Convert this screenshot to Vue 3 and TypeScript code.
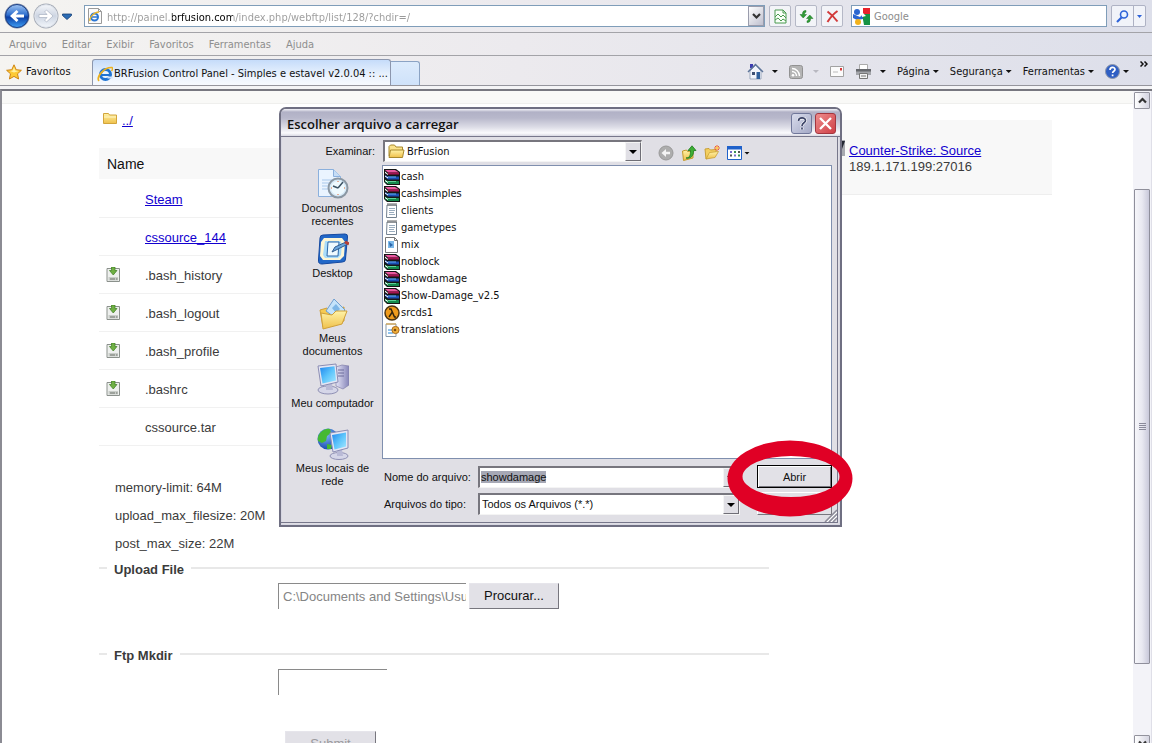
<script setup lang="ts">
import { onMounted, ref } from 'vue'

type FileKind = 'rar' | 'txt' | 'doc' | 'lambda' | 'gear'
interface FileItem { name: string; kind: FileKind }
interface Place { id: string; label: string }
interface Entry { name: string; link: boolean; download: boolean }

const menus: string[] = ['Arquivo', 'Editar', 'Exibir', 'Favoritos', 'Ferramentas', 'Ajuda']
const commands: string[] = ['Página', 'Segurança', 'Ferramentas']

const entries: Entry[] = [
  { name: 'Steam', link: true, download: false },
  { name: 'cssource_144', link: true, download: false },
  { name: '.bash_history', link: false, download: true },
  { name: '.bash_logout', link: false, download: true },
  { name: '.bash_profile', link: false, download: true },
  { name: '.bashrc', link: false, download: true },
  { name: 'cssource.tar', link: false, download: false },
]

const limits: string[] = ['memory-limit: 64M', 'upload_max_filesize: 20M', 'post_max_size: 22M']

const places: Place[] = [
  { id: 'recent', label: 'Documentos recentes' },
  { id: 'desktop', label: 'Desktop' },
  { id: 'documents', label: 'Meus documentos' },
  { id: 'computer', label: 'Meu computador' },
  { id: 'network', label: 'Meus locais de rede' },
]

const files: FileItem[] = [
  { name: 'cash', kind: 'rar' },
  { name: 'cashsimples', kind: 'rar' },
  { name: 'clients', kind: 'txt' },
  { name: 'gametypes', kind: 'txt' },
  { name: 'mix', kind: 'doc' },
  { name: 'noblock', kind: 'rar' },
  { name: 'showdamage', kind: 'rar' },
  { name: 'Show-Damage_v2.5', kind: 'rar' },
  { name: 'srcds1', kind: 'lambda' },
  { name: 'translations', kind: 'gear' },
]

const address = ref('http://painel.brfusion.com/index.php/webftp/list/128/?chdir=/')
const query = ref('')
const fileName = ref('showdamage')
const uploadPath = ref('C:\\Documents and Settings\\Usuario')
const newDir = ref('')
const nameField = ref<HTMLInputElement | null>(null)

onMounted(() => {
  nameField.value?.focus({ preventScroll: true })
  nameField.value?.select()
})
</script>

<template>
  <div class="browser">
    <svg class="defs" aria-hidden="true">
      <defs>
        <linearGradient id="gBack" x1="0" y1="0" x2="0" y2="1">
          <stop offset="0" stop-color="#9fc4f2" /><stop offset=".45" stop-color="#2f6fce" />
          <stop offset=".55" stop-color="#0b3fa6" /><stop offset="1" stop-color="#3fa0f5" />
        </linearGradient>
        <linearGradient id="gFwd" x1="0" y1="0" x2="0" y2="1">
          <stop offset="0" stop-color="#f4f6fa" /><stop offset=".5" stop-color="#cdd5e2" />
          <stop offset="1" stop-color="#f2f6fb" />
        </linearGradient>
        <linearGradient id="gScreen" x1="0" y1="0" x2="1" y2="1">
          <stop offset="0" stop-color="#1f86ee" /><stop offset=".5" stop-color="#5cc4fb" />
          <stop offset="1" stop-color="#a5e7ff" />
        </linearGradient>
        <linearGradient id="gFolder" x1="0" y1="0" x2="0" y2="1">
          <stop offset="0" stop-color="#fff3a8" /><stop offset="1" stop-color="#efc04a" />
        </linearGradient>
        <linearGradient id="gTower" x1="0" y1="0" x2="1" y2="0">
          <stop offset="0" stop-color="#e4e4f6" /><stop offset="1" stop-color="#8584b8" />
        </linearGradient>
        <radialGradient id="gGlobe" cx=".4" cy=".3" r=".8">
          <stop offset="0" stop-color="#7fb9f7" /><stop offset="1" stop-color="#0c3ba8" />
        </radialGradient>
      </defs>
    </svg>

    <header class="chrome">
      <div class="nav-row">
        <div class="nav-buttons">
          <button class="bare" type="button" aria-label="Voltar">
            <svg width="27" height="27" viewBox="0 0 27 27">
              <circle cx="13" cy="13" r="12.500" fill="#7e8ba6" />
              <circle cx="13" cy="13" r="11.500" fill="url(#gBack)" stroke="#1c3f86" />
              <path d="M6 13l6.500-6 2 2-2.700 2.500H20v3h-8.200l2.700 2.500-2 2z" fill="#fff" />
            </svg>
          </button>
          <button class="bare" type="button" aria-label="Avançar">
            <svg width="27" height="27" viewBox="0 0 27 27">
              <circle cx="13" cy="13" r="12.500" fill="#a7adb8" />
              <circle cx="13" cy="13" r="11.200" fill="url(#gFwd)" stroke="#dfe4ec" />
              <path d="M20 13l-6.500-6-2 2 2.700 2.500H6v3h8.200l-2.700 2.500 2 2z" fill="#fff" stroke="#a9b2c2" stroke-width=".7" />
            </svg>
          </button>
          <button class="bare" type="button" aria-label="Páginas recentes">
            <svg width="10" height="7" viewBox="0 0 10 7"><path d="M.500 1h9v1.500L5 6.500.500 2.500z" fill="#2b6cb4" stroke="#173f75" stroke-width=".8" /></svg>
          </button>
        </div>
        <div class="address">
          <svg width="16" height="16" viewBox="0 0 16 16">
            <path d="M1.500.500h10l3 3v12h-13z" fill="#fbfbfb" stroke="#9a9a9a" /><path d="M11.500.500v3h3" fill="none" stroke="#9a9a9a" />
            <circle cx="7.500" cy="9" r="3.500" fill="none" stroke="#2a76d4" stroke-width="2" /><path d="M5 9h6" stroke="#2a76d4" stroke-width="1.500" />
            <path d="M3 13C2 10 7 4 12 4" fill="none" stroke="#e9b52b" stroke-width="1.400" />
          </svg>
          <input id="url" v-model="address" type="text" aria-label="Endereço" />
          <button class="xp-arrow" type="button" aria-label="Mostrar endereços">
            <svg width="9" height="7" viewBox="0 0 9 7"><path d="M1 1l3.500 3.500L8 1" fill="none" stroke="#333" stroke-width="2.200" /></svg>
          </button>
        </div>
        <div class="tool-group">
          <button class="square" type="button" aria-label="Modo de compatibilidade">
            <svg width="13" height="15" viewBox="0 0 13 15">
              <path d="M1 1h8l3 3v10H1z" fill="#f8fff8" stroke="#4b9a50" /><path d="M9 1v3h3" fill="none" stroke="#4b9a50" />
              <path d="M1 8l3-3 3 3 2-2 3 3M1 11l3-2 3 3 2-2 3 2" fill="none" stroke="#4b9a50" />
            </svg>
          </button>
          <button class="square" type="button" aria-label="Atualizar">
            <svg width="15" height="15" viewBox="0 0 15 15">
              <path d="M7 1.500C4 1.500 3.500 3 3.500 5.500H1L4.200 9l3.300-3.500h-2C5.500 4 6 3.200 7 3.200z" fill="#2f9b35" stroke="#1d7424" stroke-width=".5" />
              <path d="M8 13.500c3 0 3.500-1.500 3.500-4H14L10.800 6 7.500 9.500h2c0 1.500-.500 2.300-1.500 2.300z" fill="#2f9b35" stroke="#1d7424" stroke-width=".5" />
            </svg>
          </button>
          <button class="square" type="button" aria-label="Parar">
            <svg width="13" height="13" viewBox="0 0 13 13"><path d="M1.500 1.500c4 3 7 6 10 10M11.500 1C7 4 4 8 1.500 12" fill="none" stroke="#d23a3a" stroke-width="2" /></svg>
          </button>
        </div>
        <div class="search">
          <svg width="17" height="17" viewBox="0 0 17 17">
            <path d="M0 0h17v17H0z" fill="#fff" /><path d="M9 0h8v6H9z" fill="#e8222c" /><path d="M9 6h8v11h-6z" fill="#169244" />
            <circle cx="4" cy="4" r="3" fill="#2a66d0" /><path d="M0 6l7 3 3-3v5l-6 1-4-2z" fill="#2a66d0" />
            <path d="M8 0h2v5l3 3-4 1z" fill="#fff" /><circle cx="5" cy="14" r="3" fill="#f1b21c" />
          </svg>
          <input id="q" v-model="query" type="text" placeholder="Google" aria-label="Pesquisar" />
        </div>
        <div class="search-go">
          <button type="button" aria-label="Ir">
            <svg width="13" height="13" viewBox="0 0 13 13"><circle cx="8" cy="4.500" r="3.500" fill="#eaf3ff" stroke="#2d62d8" stroke-width="1.600" /><path d="M5.500 7.500L1 12" stroke="#2d62d8" stroke-width="2.200" /></svg>
          </button>
          <button class="narrow" type="button" aria-label="Opções de pesquisa">
            <svg width="5" height="3" viewBox="0 0 5 3"><path d="M0 0h5L2.500 3z" fill="#2d62d8" /></svg>
          </button>
        </div>
      </div>

      <nav class="menu-row">
        <button v-for="m in menus" :key="m" class="bare" type="button">{{ m }}</button>
      </nav>

      <div class="tab-row">
        <button class="bare favorites" type="button">
          <svg width="16" height="16" viewBox="0 0 16 16"><path d="M8 .800l2.200 4.900 5.200.600-3.900 3.500 1.100 5.200L8 12.400 3.400 15l1.100-5.200L.600 6.300l5.200-.600z" fill="#fdca35" stroke="#cf8413" /><path d="M8 3l1.300 3.600L13 7 8 8.500 4 7l2.700-.500z" fill="#fff0a0" /></svg>
          <span>Favoritos</span>
        </button>
        <button class="tab" type="button">
          <svg width="16" height="16" viewBox="0 0 16 16">
            <circle cx="8.500" cy="8.500" r="5" fill="#e9f5ff" stroke="#1f74d2" stroke-width="3" /><path d="M5 9h9" stroke="#1f74d2" stroke-width="2" />
            <path d="M10.500 10.500h5v2h-5z" fill="#cfe3fb" />
            <path d="M2 15C-1 11 7 1 15 1.500c1 1 0 3-.500 3.500" fill="none" stroke="#edb21f" stroke-width="1.700" />
          </svg>
          <span>BRFusion Control Panel - Simples e estavel v2.0.04 :: ...</span>
        </button>
        <button class="new-tab" type="button" aria-label="Nova guia"></button>
        <div class="commands">
          <button class="bare command icon-command" type="button" aria-label="Página inicial">
            <svg width="17" height="17" viewBox="0 0 17 17">
              <path d="M3 1h3v4H3z" fill="#3b3bb0" /><path d="M3 8l6-6 5 6v8H3z" fill="#f1f4fb" stroke="#7f8fae" stroke-width=".7" />
              <path d="M1 9l7.500-7.500L16 9" fill="none" stroke="#5d7499" stroke-width="1.500" /><path d="M9.500 9h3.500v7H9.500z" fill="#2f5f9c" /><path d="M5 9h3v3H5z" fill="#3d4f74" />
            </svg>
            <i class="caret"></i>
          </button>
          <button class="bare command rss" type="button" aria-label="Feeds" disabled>
            <svg width="14" height="14" viewBox="0 0 14 14"><rect x=".5" y=".5" width="13" height="13" rx="2" fill="#b4b4b4" stroke="#929292" /><circle cx="4" cy="10.200" r="1.300" fill="#fff" /><path d="M3 6.500a4.500 4.500 0 014.500 4.500M3 3.500a7.500 7.500 0 017.500 7.500" fill="none" stroke="#fff" stroke-width="1.400" /></svg>
            <i class="caret faded"></i>
          </button>
          <button class="bare command" type="button" aria-label="Ler email">
            <svg width="14" height="11" viewBox="0 0 14 11"><path d="M.500.500h13v10H.500z" fill="#fbfbfb" stroke="#a2a2a2" /><path d="M10 2h2v2.500h-2z" fill="#d63a3a" /><path d="M3 6h5" stroke="#bbb" /></svg>
          </button>
          <button class="bare command icon-command" type="button" aria-label="Imprimir">
            <svg width="17" height="15" viewBox="0 0 17 15"><path d="M4.500.500h8v5h-8z" fill="#fff" stroke="#aaa" /><path d="M1 5h15v6H1z" fill="#a3a5aa" /><path d="M1 5h15v2.500H1z" fill="#66686d" /><path d="M4.500 9.500h8v5h-8z" fill="#f3f3f3" stroke="#777" /><path d="M6 12h5" stroke="#777" /></svg>
            <i class="caret"></i>
          </button>
          <button v-for="c in commands" :key="c" class="bare command" type="button">{{ c }}<i class="caret"></i></button>
          <button class="bare command" type="button" aria-label="Ajuda">
            <svg width="15" height="15" viewBox="0 0 15 15"><circle cx="7.500" cy="7.500" r="7" fill="#2f5fc4" stroke="#8e97aa" /><path d="M5 6c0-3.500 5-3.500 5-.500 0 1.800-2.400 1.700-2.400 3.500M7.600 10.500v1.800" fill="none" stroke="#fff" stroke-width="1.700" /></svg>
            <i class="caret"></i>
          </button>
        </div>
        <button class="bare more" type="button" aria-label="Mais comandos">
          <svg width="8" height="6" viewBox="0 0 8 6"><path d="M.500.500L3 3 .500 5.500M4.500.500L7 3 4.500 5.500" fill="none" stroke="#111" stroke-width="1.500" /></svg>
        </button>
      </div>
    </header>

    <div class="viewport">
      <main class="page">
        <div class="banner"></div>
        <div class="columns">
          <section class="files">
            <div class="parent">
              <svg width="14" height="12" viewBox="0 0 14 12"><path d="M.500 1.500h5l1 1.500h7v8.500H.500z" fill="url(#gFolder)" stroke="#d2a53c" /><path d="M1 5h12" stroke="#fff5c4" /></svg>
              <a href="#">../</a>
            </div>
            <table>
              <colgroup><col class="dl-col" /><col /></colgroup>
              <thead><tr><th colspan="2">Name</th></tr></thead>
              <tbody>
                <tr v-for="e in entries" :key="e.name">
                  <td class="dl">
                    <svg v-if="e.download" width="15" height="15" viewBox="0 0 15 15">
                      <path d="M1 1.500h12.500v13H1z" fill="#eef0ee" stroke="#8b918c" /><path d="M2.500 10h9.500v3.500H2.500z" fill="#c9cdc9" /><path d="M4 12h5M10 12h1.500" stroke="#70766f" />
                      <path d="M5.500 0h3.500v3.500H11L7.250 8 3.500 3.500h2z" fill="#6fb043" stroke="#3e7d22" stroke-width=".7" />
                    </svg>
                  </td>
                  <td class="entry"><a v-if="e.link" href="#">{{ e.name }}</a><template v-else>{{ e.name }}</template></td>
                </tr>
              </tbody>
            </table>
            <div class="limits"><p v-for="l in limits" :key="l">{{ l }}</p></div>
            <fieldset>
              <legend>Upload File</legend>
              <div class="upload">
                <input id="up" v-model="uploadPath" class="inset" type="text" aria-label="Upload File" readonly />
                <button class="classic" type="button">Procurar...</button>
              </div>
            </fieldset>
            <fieldset>
              <legend>Ftp Mkdir</legend>
              <div class="mkdir">
                <input id="dir" v-model="newDir" class="inset short" type="text" aria-label="Ftp Mkdir" />
                <button class="classic submit" type="button" disabled>Submit</button>
              </div>
            </fieldset>
          </section>
          <aside class="server">
            <svg width="16" height="16" viewBox="0 0 16 16"><path d="M0 0h16v16H0z" fill="#a7a9b0" /><path d="M2 1h14l-3 8H2z" fill="#232733" /></svg>
            <div><a href="#">Counter-Strike: Source</a><br />189.1.171.199:27016</div>
          </aside>
        </div>
      </main>
      <div class="scrollbar">
        <button class="sb-button" type="button" aria-label="Rolar para cima">
          <svg width="9" height="7" viewBox="0 0 9 7"><path d="M1 5.500L4.500 2 8 5.500" fill="none" stroke="#333" stroke-width="2.200" /></svg>
        </button>
        <div class="gap-top"></div>
        <div class="thumb"><i></i><i></i><i></i><i></i></div>
        <div class="gap-bottom"></div>
        <button class="sb-button" type="button" aria-label="Rolar para baixo">
          <svg width="9" height="7" viewBox="0 0 9 7"><path d="M1 1.500L4.500 5 8 1.500" fill="none" stroke="#333" stroke-width="2.200" /></svg>
        </button>
      </div>
    </div>

    <section class="dialog" role="dialog" aria-labelledby="dlg-title">
      <div class="title-bar">
        <h1 id="dlg-title">Escolher arquivo a carregar</h1>
        <button class="cap help" type="button" aria-label="Ajuda">
          <svg width="10" height="13" viewBox="0 0 10 13"><path d="M1.500 4c0-4 7-4 7-.500C8.500 6 5 5.500 5 9M5 10.500v2" fill="none" stroke="#fff" stroke-width="3" /><path d="M1.500 4c0-4 7-4 7-.500C8.500 6 5 5.500 5 9M5 10.500v2" fill="none" stroke="#3c4468" stroke-width="1.700" /></svg>
        </button>
        <button class="cap close" type="button" aria-label="Fechar">
          <svg width="13" height="13" viewBox="0 0 13 13"><path d="M1 1l11 11M12 1L1 12" stroke="#fff" stroke-width="2.300" /></svg>
        </button>
      </div>
      <div class="dialog-body">
        <div class="look-row">
          <label for="look">Examinar:</label>
          <div class="combo look">
            <svg width="17" height="15" viewBox="0 0 17 15"><path d="M1 12V2.500L2.500 1h4L8 3h6.500v3" fill="#fbe38c" stroke="#a8892d" /><path d="M1 13.500L2.500 6h13.500l-1.500 7.500z" fill="url(#gFolder)" stroke="#a8892d" /></svg>
            <select id="look"><option>BrFusion</option></select>
            <span class="drop"></span>
          </div>
          <div class="dialog-tools">
            <button class="bare" type="button" aria-label="Última pasta" disabled>
              <svg width="16" height="16" viewBox="0 0 16 16"><circle cx="8" cy="8" r="7" fill="#adadad" stroke="#999" /><path d="M3.500 8L8 4v2.700h4v2.600H8V12z" fill="#f4f4f4" /></svg>
            </button>
            <button class="bare" type="button" aria-label="Um nível acima">
              <svg width="16" height="16" viewBox="0 0 16 16"><path d="M1.500 6l4-1 1 1.500L12 6v7l-9.500 2.500z" fill="url(#gFolder)" stroke="#c39a2c" /><path d="M5 13c4 0 4.500-3 4.500-7.500H7L11 .800l4 4.700h-2.300C12.500 11 10 14 5 13z" fill="#3dae35" stroke="#1d7a1d" stroke-width=".8" /></svg>
            </button>
            <button class="bare" type="button" aria-label="Criar nova pasta">
              <svg width="16" height="16" viewBox="0 0 16 16"><path d="M1 4l4-.500L6.500 5l5.500-.500v3L2 14z" fill="#f3cf60" stroke="#c99f35" /><path d="M2 14l3.500-6.500 9-1L11 12.500z" fill="url(#gFolder)" stroke="#c99f35" stroke-width=".8" /><path d="M13 0v6M10 3h6M11 1l4 4M15 1l-4 4" stroke="#f0602c" /><circle cx="13" cy="3" r="1.200" fill="#ffd34d" /></svg>
            </button>
            <button class="bare views" type="button" aria-label="Exibir">
              <svg width="15" height="14" viewBox="0 0 15 14"><path d="M.500.500h14v13H.500z" fill="#fff" stroke="#1f61ca" /><path d="M0 0h15v3.500H0z" fill="#1f61ca" /><path d="M3 6h2M7 9.500h2" stroke="#7b6cd0" stroke-width="2" /><path d="M7 6h2M11 9.500h2" stroke="#3c8f54" stroke-width="2" /><path d="M11 6h2M3 9.500h2" stroke="#555" stroke-width="2" /></svg>
              <i class="caret"></i>
            </button>
          </div>
        </div>

        <div class="browse">
          <nav class="places">
            <button v-for="p in places" :key="p.id" class="bare place" type="button">
              <svg v-if="p.id === 'recent'" width="32" height="32" viewBox="0 0 32 32">
                <path d="M1.500 1.500h15l7 7v20h-22z" fill="#eaf4ff" stroke="#8bb0dd" /><path d="M16.500 1.500v7h7" fill="#c6ddf6" stroke="#8bb0dd" /><path d="M5 12h13M5 15h10M5 18h6M5 21h6" stroke="#a9c9ec" />
                <circle cx="21" cy="20" r="9.500" fill="#d6e9f7" stroke="#8a97a3" stroke-width="2" /><circle cx="21" cy="20" r="7" fill="#effaff" /><path d="M21 20l5-6M21 20l-5-2" stroke="#3c5365" stroke-width="1.500" /><path d="M21 13v1M21 26v1M14 20h1M27 20h1" stroke="#e0672e" />
              </svg>
              <svg v-else-if="p.id === 'desktop'" width="32" height="32" viewBox="0 0 32 32">
                <path d="M3 5q0-3 3-3l22-1q3 0 2.500 3l-2 22q0 3-3 3L5 31q-4 0-3.500-4z" fill="#2268c8" stroke="#1549a0" /><path d="M7 5h18l3 4-1 14-4 4H6l-3-4 1-14z" fill="#fdf6d5" />
                <path d="M8 8h15l2 3-1 11-3 3H8l-2-3z" fill="#a9dcfa" /><path d="M11 9h11l-1 14H10z" fill="#eefaff" stroke="#2b67a8" /><path d="M15 19l3-5 11-5 2 2-10 5z" fill="#69a6de" stroke="#315c8d" /><path d="M28 9l4 2" stroke="#b74034" stroke-width="3" />
              </svg>
              <svg v-else-if="p.id === 'documents'" width="32" height="32" viewBox="0 0 32 32">
                <path d="M3 12l7-2 3 3 14-4v14L6 29z" fill="#f6ca52" stroke="#cfa03a" /><path d="M17 1l11 11-8 9-11-8z" fill="#c4e3fa" stroke="#6f9fd0" /><path d="M15 10l4-4 4 5-4 4z" fill="#7db6e6" /><path d="M4 15l11 2 4-4h11l-5 13-19 5z" fill="url(#gFolder)" stroke="#cfa03a" />
              </svg>
              <svg v-else-if="p.id === 'computer'" width="32" height="32" viewBox="0 0 32 32">
                <path d="M19 4l6-2 7 1v19l-6 4-7-3z" fill="url(#gTower)" stroke="#8281aa" stroke-width=".7" /><path d="M21 7h6M21 10h6M21 13h6" stroke="#6c6c9c" />
                <ellipse cx="11" cy="27" rx="10" ry="4" fill="#d5d6e8" stroke="#8f90b4" /><path d="M9 20h6l1 7H9z" fill="#b9bad6" /><path d="M1 3l18-2 2 18-17 4z" fill="#e4e6f4" stroke="#8b8db4" /><path d="M3 5l14.500-1.700L19 17.500 5.500 20.500z" fill="url(#gScreen)" />
              </svg>
              <svg v-else width="32" height="32" viewBox="0 0 32 32">
                <circle cx="11" cy="11" r="10.500" fill="url(#gGlobe)" /><path d="M3 5q5-5 10-4l1 4-4 3-1 5-4 2-4-2q-1-4 2-8zM10 16l5 1-1 4-4 0z" fill="#45b934" />
                <ellipse cx="22" cy="28" rx="9" ry="3.500" fill="#d5d6e8" stroke="#8f90b4" /><path d="M20 21h5l1 7h-6z" fill="#b9bad6" /><path d="M13 5l18-3v18l-15 4z" fill="#e4e6f4" stroke="#8b8db4" /><path d="M15 7l14-2.500v14L17.500 21.500z" fill="url(#gScreen)" />
              </svg>
              <span>{{ p.label }}</span>
            </button>
          </nav>
          <ul class="listing">
            <li v-for="f in files" :key="f.name">
              <button class="bare" type="button">
                <svg v-if="f.kind === 'rar'" width="16" height="16" viewBox="0 0 16 16">
                  <path d="M0 0h12l4 3v13H3l-3-3z" fill="#161616" />
                  <path d="M1 1h10l4 2.500H4z" fill="#e9589f" /><path d="M4 3.500h11v2H4z" fill="#a3124f" /><path d="M1 2.500l3 2.500v1L1 4z" fill="#fff" />
                  <path d="M1 6l3 1.500h11v3H4L1 8z" fill="#1b4fb4" /><path d="M4 8h8" stroke="#63b0f0" /><path d="M1 7l3 2" stroke="#fff" />
                  <path d="M1 10.500L4 12h11v3H4l-3-2z" fill="#158a4c" /><path d="M4 12.500h8" stroke="#5ed298" /><path d="M1 11.500l3 2" stroke="#fff" />
                </svg>
                <svg v-else-if="f.kind === 'txt'" width="16" height="16" viewBox="0 0 16 16">
                  <path d="M3 2h9.500v12.500H2.500z" fill="#fff" stroke="#758391" /><path d="M4 0v3M6 0v3M8 0v3M10 0v3M12 0v3" stroke="#666" /><path d="M5 5.500h6M5 7.500h6M5 9.500h5M5 11.500h6" stroke="#9aacbd" />
                </svg>
                <svg v-else-if="f.kind === 'doc'" width="16" height="16" viewBox="0 0 16 16">
                  <path d="M1.500.500h9l3 3v12h-12z" fill="#fff" stroke="#777" /><path d="M10.500.500v3h3" fill="none" stroke="#777" /><path d="M4 4h6v7H4z" fill="#7bb8e8" /><path d="M5 5l4 3-3 2z" fill="#2a64a8" />
                </svg>
                <svg v-else-if="f.kind === 'lambda'" width="16" height="16" viewBox="0 0 16 16">
                  <circle cx="8" cy="8" r="7" fill="#ef9b1c" stroke="#4d3512" stroke-width="1.500" /><path d="M5 4h2l3.500 8H12M8 7.500L5 12" fill="none" stroke="#33230c" stroke-width="1.500" />
                </svg>
                <svg v-else width="16" height="16" viewBox="0 0 16 16">
                  <path d="M2 2h10v12.500H2z" fill="#fff" stroke="#8798a8" /><path d="M3 1v2M5 1v2M7 1v2M9 1v2M11 1v2" stroke="#e0a030" /><path d="M4 8h4M4 11h5" stroke="#8fc3ee" stroke-width="2" />
                  <circle cx="11.500" cy="8" r="3.600" fill="#f0b03a" stroke="#a9691b" /><circle cx="11" cy="8" r="1.300" fill="#7b4a18" />
                </svg>
                <span>{{ f.name }}</span>
              </button>
            </li>
          </ul>
          <form class="fields" @submit.prevent>
            <label for="fname">Nome do arquivo:</label>
            <div class="combo">
              <input id="fname" ref="nameField" v-model="fileName" type="text" spellcheck="false" />
              <span class="drop"></span>
            </div>
            <button class="dlg-button default" type="submit">Abrir</button>
            <label for="ftype">Arquivos do tipo:</label>
            <div class="combo">
              <select id="ftype"><option>Todos os Arquivos (*.*)</option></select>
              <span class="drop"></span>
            </div>
            <button class="dlg-button" type="button" aria-label="Cancelar"></button>
          </form>
        </div>
      </div>
      <svg class="grip" width="13" height="13" viewBox="0 0 13 13"><path d="M1 13L13 1M5 13l8-8M9 13l4-4" stroke="#8d8c99" stroke-width="1.500" /><path d="M3 13L13 3M7 13l6-6" stroke="#fff" /></svg>
      <svg class="ring" width="126" height="78" viewBox="0 0 126 78" aria-hidden="true">
        <path fill="#e00025" fill-rule="evenodd" d="M0.500 38.500a62.500 38 0 01125 0a62.500 38 0 01-125 0zM15.500 36.500a48.500 20.500 0 0097 0a48.500 20.500 0 00-97 0z" />
      </svg>
    </section>
  </div>
</template>

<style>
html, body { margin: 0; overflow: hidden; background: #fff; }
</style>

<style scoped>
* { box-sizing: border-box; }
.browser {
  --ui: "DejaVu Sans Condensed", "Noto Sans", sans-serif;
  --page: "Liberation Sans", Arial, sans-serif;
  position: relative; display: flex; flex-direction: column; height: 100vh; overflow: hidden;
  font: 11px/14px var(--page); color: #111;
}
.defs { position: absolute; width: 0; height: 0; }
svg { display: block; flex: none; }
button, input, select { font: inherit; color: inherit; margin: 0; outline: 0; border-radius: 0; }
.bare { padding: 0; border: 0; background: none; }
a { color: #1200cf; text-decoration: underline; }

.chrome { flex: none; background: linear-gradient(90deg, #f5f4f1, #eceaee 45%, #dddfea); border-bottom: 1px solid #95959d; font-family: var(--ui); font-size: 11px; }
.nav-row { display: flex; align-items: center; height: 33px; padding: 0 6px 0 4px; border-bottom: 1px solid #a3a3a8; }
.nav-buttons { display: flex; align-items: center; gap: 2px; width: 80px; }
.address, .search { display: flex; align-items: center; height: 22px; border: 1px solid #7f9db9; background: #fff; }
.address { flex: 1; padding-left: 2px; }
.address input {
  flex: 1; min-width: 0; padding: 2px 4px 0; border: 0; height: 20px;
  background: linear-gradient(90deg, #9a9a9a 69px, #000 69px 130px, #9a9a9a 130px);
  -webkit-background-clip: text; background-clip: text; color: transparent; font-size: 11px;
}
.xp-arrow { display: grid; place-items: center; width: 16px; height: 20px; padding: 0; border: 1px solid #9a9cac; background: linear-gradient(135deg, #fff, #bfc0cf); }
.tool-group { display: flex; gap: 4px; margin: 0 8px 0 4px; }
.square { display: grid; place-items: center; width: 22px; height: 22px; padding: 0; border: 1px solid #b5b8c6; border-radius: 2px; background: #f3f4f8; }
.search { width: 256px; padding-left: 1px; margin-right: 4px; }
.search input { flex: 1; min-width: 0; padding: 2px 4px 0; border: 0; background: none; }
.search input::placeholder { color: #8c8c8c; opacity: 1; }
.search-go { display: flex; height: 22px; border: 1px solid #aeb2c4; border-radius: 2px; background: #f1f3f9; }
.search-go button { display: grid; place-items: center; width: 21px; padding: 0; border: 0; background: none; }
.search-go .narrow { width: 12px; border-left: 1px solid #aeb2c4; }
.menu-row { display: flex; align-items: center; gap: 15px; height: 23px; padding: 2px 0 0 9px; border-bottom: 1px solid #a3a3a8; }
.menu-row button { color: #8e8e8e; }
.tab-row { display: flex; align-items: flex-end; height: 29px; padding-right: 3px; }
.favorites { display: flex; align-items: center; gap: 4px; align-self: center; width: 86px; margin-left: 6px; padding-top: 2px; }
.tab { display: flex; align-items: center; gap: 1px; width: 299px; height: 26px; padding: 2px 4px 0; border: 1px solid #8c96ad; border-bottom: 0; border-radius: 3px 3px 0 0; background: linear-gradient(#c5dcfa, #eaf2fd 60%, #f6f9fe); white-space: nowrap; }
.new-tab { width: 29px; height: 24px; padding: 0; border: 1px solid #8ba3c4; border-left: 0; border-bottom: 0; border-radius: 0 3px 0 0; background: linear-gradient(#dcebfc, #cfe2fa); }
.commands { display: flex; flex: 1; align-self: center; justify-content: flex-end; align-items: center; gap: 11px; margin-right: 11px; padding-top: 2px; }
.command { display: flex; align-items: center; gap: 3px; white-space: nowrap; }
.icon-command { gap: 8px; }
.rss { gap: 10px; }
.caret { width: 6px; height: 3px; background: #111; clip-path: polygon(0 0, 100% 0, 50% 100%); }
.caret.faded { background: #b8b8c0; }
.more { align-self: flex-start; margin-top: 5px; width: 9px; }

.viewport { display: flex; flex: 1; min-height: 0; margin-top: 3px; border-top: 2px solid #77777f; border-left: 2px solid #8b8b93; background: #fff; box-shadow: 0 -3px 0 #f4f4f6; }
.page { flex: 1; min-width: 0; overflow: hidden; font: 13px/16px var(--page); color: #3b3b3b; }
.banner { height: 13px; background: #f9f9f7; border-bottom: 1px solid #efefed; }
.columns { display: grid; grid-template-columns: minmax(0, 670px) minmax(0, 263px); column-gap: 20px; align-items: start; padding-left: 97px; }
.parent { display: flex; gap: 5px; padding: 8px 0 0 4px; height: 44px; }
.parent a { margin-top: 1px; }
table { width: 100%; border-collapse: collapse; table-layout: fixed; }
.dl-col { width: 46px; }
th { height: 31px; padding: 0 8px; background: #f8f8f8; color: #111; font-weight: 400; font-size: 14px; text-align: left; }
td { height: 38px; padding: 0; border-bottom: 1px solid #f1f1f1; }
.dl { padding-left: 7px; }
.entry { padding-top: 4px; }
.limits { padding: 28px 0 0 16px; }
.limits p { height: 28px; margin: 0; line-height: 28px; }
fieldset { min-width: 0; height: 86px; margin: 0; padding: 0 0 0 179px; border: 0; border-top: 2px solid #e8e8e8; }
legend { margin-left: -171px; padding: 4px 7px 0; font-weight: 700; line-height: 16px; }
.upload { display: flex; gap: 3px; padding-top: 5px; }
.inset { width: 188px; height: 26px; padding: 0 0 0 4px; border: solid #8a8a8a; border-width: 1px 0 0 1px; background: none; color: #858585; }
.short { width: 109px; }
.classic { height: 26px; width: 90px; padding: 0; border: 1px solid #e6e5eb; border-right-color: #77767e; border-bottom-color: #77767e; background: #e2e1e7; color: #111; }
.mkdir { display: flex; flex-direction: column; gap: 36px; padding-top: 5px; }
.submit { width: 91px; margin-left: 7px; color: #9a9a9e; }
.server { display: flex; gap: 4px; height: 75px; margin-top: 16px; padding: 20px 0 0 40px; background: #f8f8f8; border-bottom: 1px solid #eee; }
.server div { padding-top: 3px; }

.scrollbar { display: flex; flex-direction: column; width: 19px; padding: 1px 2px 0 1px; background: #f3f3f8; border-right: 1px solid #dfdfe8; height: calc(100% + 9px); }
.sb-button { display: grid; place-items: center; flex: none; width: 16px; height: 17px; padding: 0; border: 1px solid #93939d; border-radius: 1px; background: linear-gradient(90deg, #fff, #d5d5e1); }
.gap-top { flex: 81; }
.gap-bottom { flex: 71; }
.thumb { flex: 476; display: flex; flex-direction: column; justify-content: center; align-items: center; gap: 1px; width: 16px; border: 1px solid #8f8f9b; border-radius: 1px; background: linear-gradient(90deg, #f6f6fa, #e9e9f1 50%, #c9c9da); }
.thumb i { width: 7px; height: 1px; background: #8a8a9a; }

.dialog { position: absolute; left: 279px; top: 107px; width: 563px; border: 2px solid #6f6f82; border-radius: 7px 7px 0 0; background: #e0dfe5; box-shadow: inset 0 0 0 1px #d7d7e2; color: #111; }
.title-bar { display: flex; align-items: center; gap: 3px; height: 28px; padding: 1px 4px 0 6px; border-bottom: 1px solid #77778b; border-radius: 5px 5px 0 0; background: linear-gradient(#f3f3f8 0, #b1b1c6 3px, #b8b8cb 9px, #dcdce6 18px, #fbfbfd 24px, #d8d8e2); }
h1 { flex: 1; margin: 0; padding-top: 2px; font: 600 13px/16px "Open Sans", "Noto Sans", sans-serif; }
.cap { display: grid; place-items: center; width: 21px; height: 21px; padding: 0; border: 1px solid #70779a; border-radius: 3px; }
.help { background: linear-gradient(135deg, #d9dcec, #a4a9c6); }
.close { border-color: #a3363f; background: linear-gradient(135deg, #ee8d8d, #cf3f46); }
.dialog-body { margin: 0 2px 2px 0; padding: 1px 5px 7px 2px; border-right: 1px solid #77778b; border-bottom: 1px solid #77778b; }
.look-row { display: grid; grid-template-columns: 92px 259px 1fr; column-gap: 8px; align-items: center; height: 27px; padding-bottom: 1px; }
.look-row label { text-align: right; }
.combo { position: relative; display: flex; align-items: center; height: 22px; border: 2px solid #77767e; border-right: 1px solid #f4f4f4; border-bottom: 1px solid #f4f4f4; background: #fff; }
.combo select, .combo input { flex: 1; min-width: 0; width: 100%; height: 100%; padding: 0 18px 0 1px; border: 0; background: none; appearance: none; }
.combo select { padding-left: 2px; }
.combo.look { gap: 2px; padding-left: 3px; }
.combo.look select { padding-left: 0; font-family: var(--ui); }
.combo input { color: #111; }
.combo input::selection { background: #a6a8b5; color: #111; }
.drop { position: absolute; right: 0; top: 0; bottom: 0; width: 16px; border: 1px solid #f5f5f5; border-right-color: #6f6e76; border-bottom-color: #6f6e76; background: #e0dfe5; pointer-events: none; }
.drop::after { content: ""; position: absolute; left: 3px; top: 7px; border: 4px solid transparent; border-top-color: #000; border-bottom: 0; }
.dialog-tools { display: flex; gap: 7px; padding: 4px 0 0 8px; }
.views { display: flex; align-items: center; gap: 2px; }
.browse { display: grid; grid-template-columns: 99px minmax(0, 1fr); grid-template-rows: 294px auto; }
.places { grid-row: 1 / 3; display: flex; flex-direction: column; padding-top: 3px; }
.place { display: flex; flex-direction: column; align-items: center; gap: 2px; height: 65px; line-height: 13px; }
.place span { max-width: 85px; }
.listing { margin: 0; padding: 2px 1px; list-style: none; border: 1px solid #7f8fae; background: #fff; }
.listing li { height: 17px; }
.listing button { display: flex; align-items: center; gap: 1px; height: 17px; font-family: var(--ui); }
.fields { display: grid; grid-template-columns: 96px 262px 1fr; row-gap: 4px; align-items: center; align-content: start; padding-top: 6px; }
.fields label { padding-left: 2px; }
.dlg-button { justify-self: end; width: 75px; height: 23px; padding: 0; border: 1px solid #fff; border-right-color: #77767e; border-bottom-color: #77767e; background: #e2e1e7; }
.dlg-button.default { border: 1px solid #000; box-shadow: inset 1px 1px 0 #fff, inset -1px -1px 0 #77767e; }
.grip { position: absolute; right: 3px; bottom: 3px; }
.ring { position: absolute; left: 446px; top: 331px; pointer-events: none; }
</style>
